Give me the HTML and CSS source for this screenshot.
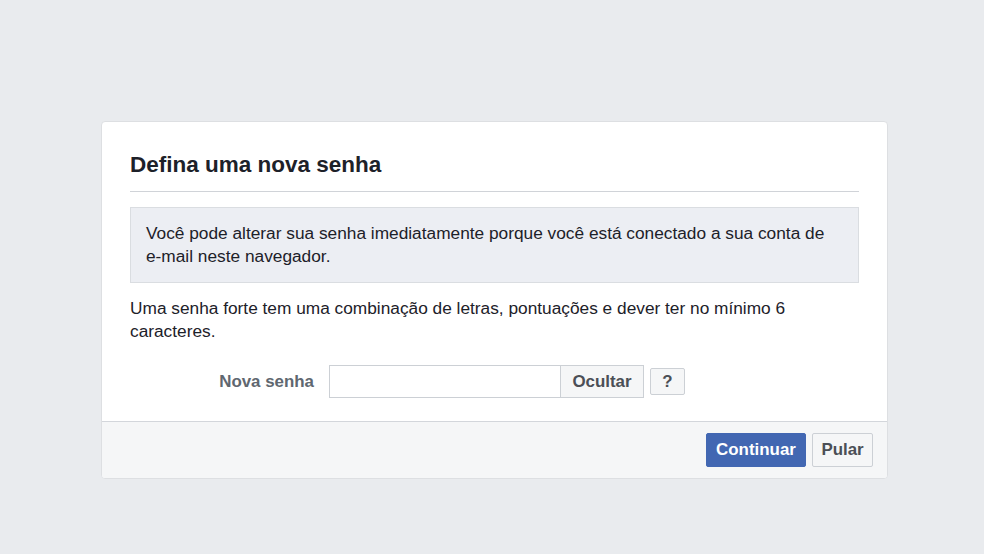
FILE: index.html
```html
<!DOCTYPE html>
<html lang="pt-BR">
<head>
<meta charset="utf-8">
<title>Defina uma nova senha</title>
<link rel="stylesheet" href="styles.css">
</head>
<body>
<div class="page">
  <div class="card">
    <div class="card-body">
      <h2 class="title">Defina uma nova senha</h2>
      <div class="notice">Você pode alterar sua senha imediatamente porque você está conectado a sua conta de e-mail neste navegador.</div>
      <p class="hint">Uma senha forte tem uma combinação de letras, pontuações e dever ter no mínimo 6 caracteres.</p>
      <div class="field-row">
        <label class="field-label" for="pw">Nova senha</label>
        <div class="field-group">
          <input id="pw" class="field-input" type="password">
          <button class="toggle" type="button">Ocultar</button>
        </div>
        <button class="help" type="button">?</button>
      </div>
    </div>
    <div class="card-footer">
      <button class="btn btn-primary" type="button">Continuar</button>
      <button class="btn btn-secondary" type="button">Pular</button>
    </div>
  </div>
</div>
</body>
</html>
```

FILE: styles.css
```css
html, body {
  margin: 0;
  padding: 0;
}
body {
  background: #e9ebee;
  font-family: "Liberation Sans", Arial, sans-serif;
  color: #1d2129;
  font-size: 17.3px;
}
.page {
  padding: 121px 0 0 101px;
}
.card {
  width: 785px;
  height: 356px;
  background: #fff;
  border: 1px solid #dddfe2;
  border-radius: 4px;
  display: flex;
  flex-direction: column;
  overflow: hidden;
}
.card-body {
  flex: 1;
  padding: 28px 28px 0 28px;
}
.title {
  margin: 0;
  font-size: 22.5px;
  line-height: 29px;
  font-weight: bold;
  color: #1d2129;
  padding-bottom: 12px;
  border-bottom: 1px solid #d0d3d8;
}
.notice {
  margin-top: 15px;
  background: #eceef3;
  border: 1px solid #dadde1;
  padding: 14px 15px;
  line-height: 23px;
  color: #1d2129;
}
.hint {
  margin: 14px 0 0 0;
  line-height: 23px;
  color: #1d2129;
}
.field-row {
  display: flex;
  align-items: center;
  margin-top: 22px;
}
.field-label {
  width: 184px;
  text-align: right;
  font-weight: bold;
  font-size: 16.9px;
  color: #606770;
  margin-right: 15px;
}
.field-group {
  display: flex;
  height: 33px;
}
.field-input {
  box-sizing: border-box;
  width: 231px;
  height: 33px;
  margin: 0;
  border: 1px solid #ccd0d5;
  border-right: none;
  font: inherit;
  padding: 0 6px;
  outline: none;
}
.toggle {
  box-sizing: border-box;
  width: 84px;
  height: 33px;
  margin: 0;
  border: 1px solid #ccd0d5;
  background: #f5f6f7;
  color: #4b4f56;
  font: bold 16.9px "Liberation Sans", Arial, sans-serif;
  padding: 0;
}
.help {
  box-sizing: border-box;
  margin-left: 6px;
  width: 35px;
  height: 27px;
  border: 1px solid #ccd0d5;
  border-radius: 2px;
  background: #f5f6f7;
  color: #4b4f56;
  font: bold 16.9px "Liberation Sans", Arial, sans-serif;
  padding: 0;
}
.card-footer {
  height: 57px;
  box-sizing: border-box;
  background: #f5f6f7;
  border-top: 1px solid #d3d6db;
  display: flex;
  justify-content: flex-end;
  align-items: flex-start;
  padding: 11px 14px 0 0;
  gap: 6px;
}
.btn {
  box-sizing: border-box;
  height: 34px;
  border-radius: 2px;
  font: bold 16.9px "Liberation Sans", Arial, sans-serif;
  padding: 0;
  margin: 0;
}
.btn-primary {
  background: #4267b2;
  border: 1px solid #4267b2;
  color: #fff;
  width: 100px;
}
.btn-secondary {
  background: #f5f6f7;
  border: 1px solid #ccd0d5;
  color: #4b4f56;
  width: 61px;
}
```
